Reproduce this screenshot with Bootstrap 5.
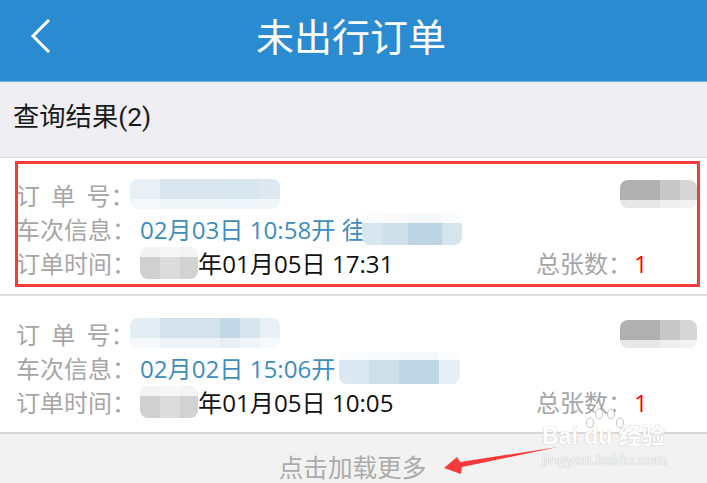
<!DOCTYPE html>
<html lang="zh-CN">
<head>
    <meta charset="UTF-8">
    <meta name="viewport" content="width=device-width, initial-scale=1.0">
    <title>未出行订单</title>
    <link href="https://cdn.jsdelivr.net/npm/bootstrap@5.3.5/dist/css/bootstrap.min.css" rel="stylesheet">
    <style>
        html, body { height: 100%; overflow: hidden; }
        body { font-family: "Open Sans", "Noto Sans CJK SC", sans-serif; background: #fff; }
        .page { width: 707px; height: 483px; }
        .top-bar { height: 82px; background: #2b8bd0; border-bottom: 1px solid #6fb1e0; color: #fff; }
        .top-bar h1 { font-size: 38px; font-weight: 400; margin: 0 0 0 256px; line-height: 70px; font-family: "Noto Sans CJK SC", sans-serif; }
        .back-arrow { position: absolute; left: 30px; top: 18px; }
        .result-head { height: 76px; background: #efeef3; border-bottom: 1px solid #dcdce0; padding-left: 13px; font-size: 26.3px; line-height: 70px; color: #1a1a1a; font-family: Roboto, "Noto Sans CJK SC", sans-serif; }
        .order-item { height: 138px; padding: 21px 10px 0 16px; border-bottom: 2px solid #dedede; }
        .order-item.second { padding-top: 22px; border-bottom-color: #d8d8d8; }
        .order-line { height: 34px; line-height: 34px; font-size: 24px; white-space: nowrap; }
        .lbl { width: 124px; color: #a6a6a6; flex: none; }
        .lbl-spaced { word-spacing: 5px; }
        .val-blue { color: #3f8dbb; font-size: 24.15px; }
        .val-black { color: #111; font-size: 24.15px; }
        .total-lbl { color: #a6a6a6; margin-left: auto; width: 98px; }
        .total-num { color: #f00; width: 63px; }
        .smudge { display: block; flex: none; height: 30px; border-radius: 8px; }
        .s-id-1 { width: 150px; margin-left: -10px; background: linear-gradient(180deg, transparent 0 66%, rgba(255,255,255,.6) 66%), linear-gradient(90deg, #e8f0f6 0 30px, #dae6ef 30px 90px, #d8e6f0 90px 130px, #dde8f1 130px); }
        .s-id-2 { width: 150px; margin-left: -10px; background: linear-gradient(180deg, transparent 0 66%, rgba(255,255,255,.6) 66%), linear-gradient(90deg, #e3edf4 0 30px, #d3e2ec 30px 90px, #c3d8e6 90px 110px, #d6e4ee 110px 130px, #e8f0f6 130px); }
        .s-train-1 { width: 100px; height: 32px; margin-left: -4px; background: linear-gradient(180deg, rgba(255,255,255,.85) 0 30%, transparent 30%), linear-gradient(90deg, #d8e6ef 0 20px, #cfe0ea 20px 46px, #bcd4e3 46px 80px, #d6e4ee 80px); }
        .s-train-2 { width: 121px; height: 32px; margin-left: 4px; background: linear-gradient(180deg, rgba(255,255,255,.85) 0 25%, transparent 25%), linear-gradient(90deg, #dde9f2 0 30px, #cde0ea 30px 60px, #bfd6e5 60px 100px, #e6eff5 100px); }
        .s-year { width: 58px; height: 32px; background: linear-gradient(180deg, rgba(255,255,255,.75) 0 30%, transparent 30%), linear-gradient(90deg, #d0d0d0 0 20px, #dcdcdc 20px 40px, #d2d2d2 40px); }
        .s-phone { position: absolute; left: 620px; width: 77px; height: 28px; background: linear-gradient(180deg, transparent 0 72%, rgba(255,255,255,.7) 72%), linear-gradient(90deg, #b0b0b0 0 40px, #c8c8c8 40px 60px, #d6d6d6 60px); }
        .s-phone.one { top: 180px; }
        .s-phone.two { top: 320px; }
        .load-more { height: 50px; background: #f2f2f2; color: #ababab; font-size: 24.6px; line-height: 70px; text-align: center; overflow: hidden; font-family: "Noto Sans CJK SC", sans-serif; }
        .load-more span { position: relative; top: -3px; left: -1px; }
        .mark-box { position: absolute; left: 15px; top: 161px; width: 685px; height: 126px; border: 3px solid #f43a3a; pointer-events: none; }
        .pointer-arrow { position: absolute; left: 440px; top: 442px; }
        .watermark { position: absolute; left: 540px; top: 408px; width: 170px; color: #fff; text-shadow: 0 0 1px #c4c4c4, 0 0 1px #c4c4c4; line-height: 1; font-family: "Liberation Sans", "Noto Sans CJK SC", sans-serif; white-space: nowrap; }
        .wm-brand { font-size: 23px; font-weight: 700; position: absolute; top: 17px; left: 2px; }
        .wm-site { font-size: 14.5px; letter-spacing: .5px; position: absolute; top: 45px; left: 2px; color: #f6f6f6; }
        .wm-paw { position: absolute; left: 44px; top: 0; }
    </style>
</head>
<body>
    <div class="page position-relative">
        <div class="top-bar position-relative">
            <svg class="back-arrow" width="22" height="36" viewBox="0 0 22 36">
                <path d="M19 2 L3 18 L19 34" fill="none" stroke="#fff" stroke-width="3"/>
            </svg>
            <h1>未出行订单</h1>
        </div>
        <div class="result-head">查询结果(2)</div>

        <div class="order-item">
            <div class="order-line d-flex">
                <span class="lbl lbl-spaced">订 单 号：</span>
                <span class="smudge s-id-1"></span>
            </div>
            <div class="order-line d-flex">
                <span class="lbl">车次信息：</span>
                <span class="val-blue">02月03日 10:58开 徍</span>
                <span class="smudge s-train-1"></span>
            </div>
            <div class="order-line d-flex">
                <span class="lbl">订单时间：</span>
                <span class="smudge s-year"></span>
                <span class="val-black">年01月05日 17:31</span>
                <span class="total-lbl">总张数：</span>
                <span class="total-num">1</span>
            </div>
        </div>

        <div class="order-item second">
            <div class="order-line d-flex">
                <span class="lbl lbl-spaced">订 单 号：</span>
                <span class="smudge s-id-2"></span>
            </div>
            <div class="order-line d-flex">
                <span class="lbl">车次信息：</span>
                <span class="val-blue">02月02日 15:06开</span>
                <span class="smudge s-train-2"></span>
            </div>
            <div class="order-line d-flex">
                <span class="lbl">订单时间：</span>
                <span class="smudge s-year"></span>
                <span class="val-black">年01月05日 10:05</span>
                <span class="total-lbl">总张数：</span>
                <span class="total-num">1</span>
            </div>
        </div>

        <div class="load-more"><span>点击加载更多</span></div>

        <span class="smudge s-phone one"></span>
        <span class="smudge s-phone two"></span>
        <div class="mark-box"></div>

        <div class="watermark">
            <svg class="wm-paw" width="42" height="22" viewBox="0 0 42 22">
                <g fill="#fff" stroke="#c4c4c4" stroke-width="1">
                    <ellipse cx="6" cy="15" rx="3.5" ry="5"/>
                    <ellipse cx="15" cy="6" rx="3.5" ry="5"/>
                    <ellipse cx="27" cy="6" rx="3.5" ry="5"/>
                    <ellipse cx="36" cy="15" rx="3.5" ry="5"/>
                </g>
            </svg>
            <span class="wm-brand">Bai du 经验</span>
            <span class="wm-site">jingyan.baidu.com</span>
        </div>

        <svg class="pointer-arrow" width="122" height="36" viewBox="0 0 122 36">
            <polygon points="4,26 17,15 20,20 118,5 22,25 21,32" fill="#f43a3a"/>
        </svg>
    </div>
    <script src="https://cdn.jsdelivr.net/npm/bootstrap@5.3.5/dist/js/bootstrap.bundle.min.js"></script>
</body>
</html>
